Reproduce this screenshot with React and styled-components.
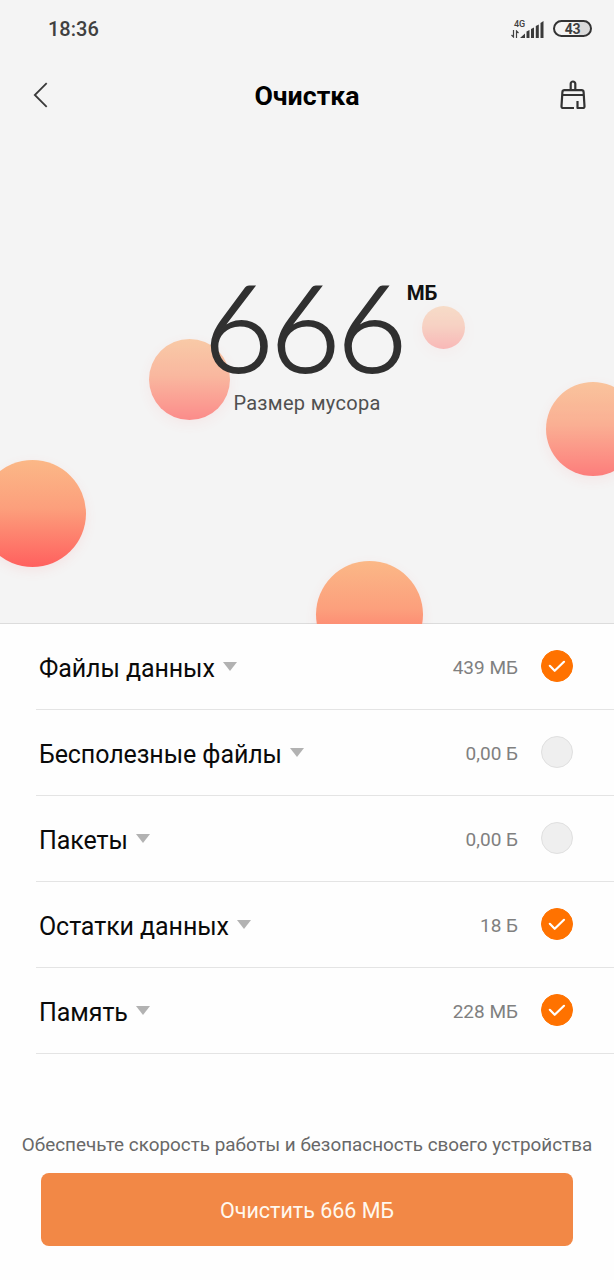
import React, { useState } from "react";
import styled, { createGlobalStyle } from "styled-components";

const GlobalStyle = createGlobalStyle`
  * {
    box-sizing: border-box;
  }
  body {
    margin: 0;
    background: #fefefe;
    font-family: Roboto, "Noto Sans", sans-serif;
  }
`;

const Screen = styled.div`
  width: 614px;
  height: 1280px;
  display: flex;
  flex-direction: column;
  overflow: hidden;
`;

const Top = styled.section`
  position: relative;
  height: 624px;
  flex: none;
  overflow: hidden;
  background: #f4f4f4;
  box-shadow: inset 0 -1px #dcdcdc;
`;

const StatusBar = styled.div`
  height: 58px;
  padding: 0 22px 0 48px;
  display: flex;
  align-items: center;
  justify-content: space-between;
  color: #404040;
`;

const Clock = styled.span`
  font-size: 20px;
  font-weight: 500;
  line-height: 24px;
`;

const StatusIcons = styled.div`
  display: flex;
  align-items: center;
  gap: 9px;
  padding-bottom: 1px;
`;

const Network = styled.div`
  display: flex;
  align-items: flex-end;
  gap: 1px;
  height: 20px;
  padding-bottom: 1px;
`;

const NetworkType = styled.div`
  display: flex;
  flex-direction: column;
  width: 8px;
  font-size: 9px;
  font-weight: 500;
  line-height: 10px;
  span {
    margin: -1px 0 1px 3px;
    white-space: nowrap;
  }
`;

const Battery = styled.div`
  width: 39px;
  height: 17px;
  border: 2px solid #333;
  border-radius: 9px;
  background: linear-gradient(90deg, #f4f4f4 68%, #dadada 68%);
  background-clip: content-box;
  display: flex;
  align-items: center;
  justify-content: center;
  font-size: 14px;
  font-weight: 700;
  line-height: 14px;
  letter-spacing: -0.3px;
`;

const Header = styled.header`
  height: 74px;
  padding: 0 28px 0 33px;
  display: flex;
  align-items: center;
  justify-content: space-between;
  h1 {
    margin: 1px 5px 0 0;
    color: #000;
    font-size: 26.7px;
    font-weight: 700;
    line-height: 32px;
  }
`;

const IconButton = styled.button`
  width: 26px;
  height: 32px;
  padding: 0;
  border: 0;
  background: none;
  display: flex;
  align-items: center;
  justify-content: ${(props) => props.$align || "center"};
`;

const Bubble = styled.span`
  position: absolute;
  left: ${(props) => props.$x - props.$r}px;
  top: ${(props) => props.$y - props.$r}px;
  width: ${(props) => props.$r * 2}px;
  height: ${(props) => props.$r * 2}px;
  border-radius: 50%;
  opacity: ${(props) => props.$opacity};
  background: linear-gradient(#fbb887, #fc9f7c 45%, #ff605e);
  box-shadow: 0 4px 12px rgba(255, 96, 94, 0.1);
`;

const Summary = styled.div`
  position: relative;
  padding-top: 141px;
  display: flex;
  flex-direction: column;
  align-items: center;
`;

const Amount = styled.div`
  display: flex;
  align-items: flex-start;
  height: 112px;
  margin-left: 27px;
`;

const Digits = styled.span`
  font-family: Lato, sans-serif;
  font-size: 121px;
  font-weight: 300;
  line-height: 106px;
  letter-spacing: -3.5px;
  color: #303030;
  -webkit-text-stroke: 1.9px #303030;
`;

const Unit = styled.span`
  margin: 8px 0 0 3px;
  font-size: 20.5px;
  font-weight: 700;
  line-height: 24px;
  color: #111;
`;

const Caption = styled.div`
  margin-top: 6px;
  font-size: 20px;
  line-height: 24px;
  letter-spacing: 0.3px;
  color: #505050;
`;

const List = styled.ul`
  margin: 0;
  padding: 0 0 0 36px;
  list-style: none;
`;

const Row = styled.li`
  height: 86px;
  padding: 0 41px 0 3px;
  display: flex;
  align-items: center;
  border-bottom: 1px solid #e4e4e4;
`;

const Name = styled.span`
  font-size: 25px;
  line-height: 32px;
  letter-spacing: -0.08px;
  color: #0a0a0a;
  padding-top: 4px;
`;

const Triangle = styled.span`
  margin: -1px 0 0 8px;
  border: 7.5px solid transparent;
  border-top: 9px solid #b2b2b2;
  border-bottom: 0;
`;

const Size = styled.span`
  margin-left: auto;
  padding-top: 2px;
  font-size: 19px;
  line-height: 24px;
  color: #808080;
`;

const Check = styled.button`
  width: 32px;
  height: 32px;
  margin: 0 0 1px 23px;
  padding: 0;
  flex: none;
  display: flex;
  align-items: center;
  justify-content: center;
  border-radius: 50%;
  border: 1px solid ${(props) => (props.$on ? "#ff7200" : "#e0e0e0")};
  background: ${(props) => (props.$on ? "#ff7200" : "#efefef")};
`;

const Footer = styled.footer`
  margin-top: 79px;
  display: flex;
  flex-direction: column;
  align-items: center;
  p {
    margin: 0;
    font-size: 18.87px;
    line-height: 24px;
    white-space: nowrap;
    color: #686868;
  }
`;

const CleanButton = styled.button`
  width: 532px;
  height: 73px;
  margin-top: 16px;
  padding: 2px 0 0;
  border: 0;
  border-radius: 8px;
  background: #f28846;
  color: #fff8ee;
  font-family: inherit;
  font-size: 21.5px;
`;

const bubbles = [
  { x: 189.5, y: 379.5, r: 40.5, opacity: 0.7 },
  { x: 443, y: 327.5, r: 21.5, opacity: 0.4 },
  { x: 593, y: 429, r: 47, opacity: 0.8 },
  { x: 32.5, y: 513.5, r: 53.5, opacity: 1 },
  { x: 369.5, y: 614.5, r: 53.5, opacity: 1 },
];

const items = [
  { name: "Файлы данных", size: "439 МБ", on: true },
  { name: "Бесполезные файлы", size: "0,00 Б", on: false },
  { name: "Пакеты", size: "0,00 Б", on: false },
  { name: "Остатки данных", size: "18 Б", on: true },
  { name: "Память", size: "228 МБ", on: true },
];

const Arrows = () => (
  <svg width="8" height="8" viewBox="0 0 8 8" fill="none" stroke="#404040" strokeWidth="1.2">
    <path d="M2.5 0v7L.5 5M5.5 8V1l2 2" />
  </svg>
);

const Signal = () => (
  <svg width="24" height="17" viewBox="0 0 24 17" fill="#3a3a3a">
    <path d="M0 17L5 12.5V17zM6.5 10.5L9.5 9v8h-3zM11 8l3-1.5V17h-3zM15.8 5l3-1.5V17h-3zM20.5 2L23.5 0v17h-3z" />
  </svg>
);

const Back = () => (
  <svg width="16" height="26" viewBox="0 0 16 26" fill="none" stroke="#3a3a3a" strokeWidth="1.8">
    <path d="M13.7 1.2L1.8 13l11.9 11.8" />
  </svg>
);

const Broom = () => (
  <svg width="26" height="30" viewBox="0 0 26 30" fill="none" stroke="#333" strokeWidth="2.2" strokeLinejoin="round">
    <path d="M10.7 10V3.8a2.3 2.3 0 0 1 4.6 0V10" />
    <path d="M14 28H3a1.5 1.5 0 0 1-1.5-1.7L2.4 12a2 2 0 0 1 2-1.8h17.2a2 2 0 0 1 2 1.8l.9 14.3a1.5 1.5 0 0 1-1.5 1.7h-5.500V21M2.500 15h21" />
  </svg>
);

const Tick = () => (
  <svg width="18" height="14" viewBox="0 0 18 14" fill="none" stroke="#fff" strokeWidth="2.2" strokeLinecap="round" strokeLinejoin="round">
    <path d="M1.8 6.8l4.9 5L16 2.8" />
  </svg>
);

export default () => {
  const [rows, setRows] = useState(items);
  const toggle = (index) =>
    setRows(rows.map((row, i) => (i === index ? { ...row, on: !row.on } : row)));

  return (
    <Screen>
      <GlobalStyle />
      <Top>
        {bubbles.map((b) => (
          <Bubble key={b.x} $x={b.x} $y={b.y} $r={b.r} $opacity={b.opacity} />
        ))}
        <StatusBar>
          <Clock>18:36</Clock>
          <StatusIcons>
            <Network>
              <NetworkType>
                <span>4G</span>
                <Arrows />
              </NetworkType>
              <Signal />
            </Network>
            <Battery>43</Battery>
          </StatusIcons>
        </StatusBar>
        <Header>
          <IconButton $align="flex-start" aria-label="Назад">
            <Back />
          </IconButton>
          <h1>Очистка</h1>
          <IconButton aria-label="Очистка">
            <Broom />
          </IconButton>
        </Header>
        <Summary>
          <Amount>
            <Digits>666</Digits>
            <Unit>МБ</Unit>
          </Amount>
          <Caption>Размер мусора</Caption>
        </Summary>
      </Top>
      <List>
        {rows.map((row, i) => (
          <Row key={row.name}>
            <Name>{row.name}</Name>
            <Triangle />
            <Size>{row.size}</Size>
            <Check $on={row.on} onClick={() => toggle(i)} aria-label={row.name}>
              {row.on && <Tick />}
            </Check>
          </Row>
        ))}
      </List>
      <Footer>
        <p>Обеспечьте скорость работы и безопасность своего устройства</p>
        <CleanButton>Очистить 666 МБ</CleanButton>
      </Footer>
    </Screen>
  );
};
